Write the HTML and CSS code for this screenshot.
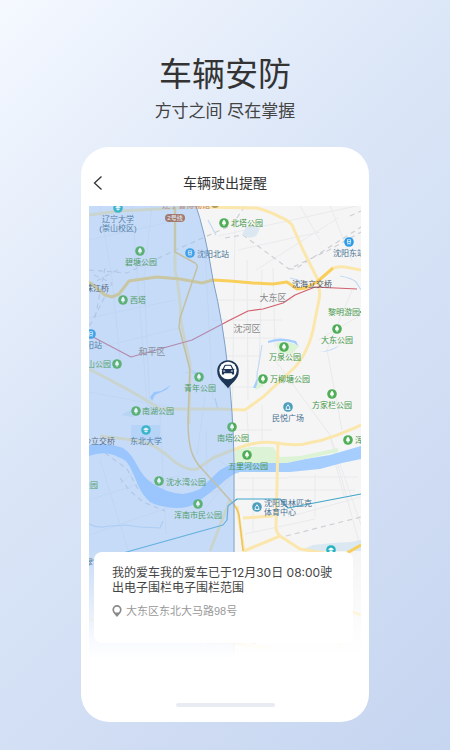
FILE: index.html
```html
<!DOCTYPE html>
<html lang="zh-CN">
<head>
<meta charset="utf-8">
<meta name="viewport" content="width=device-width, initial-scale=1">
<title>车辆安防</title>
<link rel="stylesheet" href="styles.css">
</head>
<body>
<header class="intro">
  <h1 class="intro-title">车辆安防</h1>
  <p class="intro-text">方寸之间 尽在掌握</p>
</header>
<main class="phone">
  <div class="nav">
    <button class="back" type="button" aria-label="返回">
      <svg width="10" height="16" viewBox="0 0 10 16"><path d="M8.500 1.500 1.500 8l7 6.500"/></svg>
    </button>
    <h2 class="nav-title">车辆驶出提醒</h2>
  </div>
  <section class="stage">
    <svg class="map" viewBox="89 206 272 454" role="img" aria-label="地图">
      <defs>
        <symbol id="park" viewBox="0 0 10 10"><circle cx="5" cy="5" r="4.800" fill="#4fae57"/><path d="M5 1.800C3.800 2.900 3.100 4.300 3.100 5.200c0 .9.700 1.400 1.500 1.400v1.500h.8V6.600c.8 0 1.500-.5 1.500-1.400C6.900 4.300 6.200 2.900 5 1.800z" fill="#fff"/></symbol>
        <symbol id="station" viewBox="0 0 10 10"><circle cx="5" cy="5" r="4.800" fill="#2a9be6"/><path d="M3.400 2.700h3.200v3.600H3.400zM3.400 4.500h3.200M3.700 7.800l.8-1.300M6.300 7.800l-.8-1.300" fill="none" stroke="#fff" stroke-width=".7"/></symbol>
        <symbol id="school" viewBox="0 0 10 10"><circle cx="5" cy="5" r="4.800" fill="#25b3bf"/><path d="M2 4.200 5 2.600l3 1.600-3 1.600zM3.400 5.400v1.300L5 7.600l1.600-.9V5.400L5 6.200z" fill="#fff"/></symbol>
        <symbol id="venue" viewBox="0 0 10 10"><circle cx="5" cy="5" r="4.800" fill="#4b9fbd"/><path d="M3.300 7V5.300L5 2.700l1.700 2.600V7M2.500 7.400h5" fill="none" stroke="#fff" stroke-width=".9"/></symbol>
        <linearGradient id="fade" x1="0" y1="550" x2="0" y2="659" gradientUnits="userSpaceOnUse"><stop offset="0" stop-color="#fff" stop-opacity="0"/><stop offset=".5" stop-color="#fff" stop-opacity=".5"/><stop offset=".8" stop-color="#fff" stop-opacity=".84"/><stop offset="1" stop-color="#fff"/></linearGradient>
      </defs>
      <path class="land" d="M89 206h272v454H89z"/>
      <g class="streets">
        <path d="M89 240 170 222M89 318 175 300M89 350l90-22M89 392l95 18M100 206l12 72 8 80M132 206l16 210M152 206l-8 72 6 130M205 250l8 150M235 230l-3 200M247 260l1 140M262 270l-3 95M273 268l2 80M218 300h75M212 320h70M222 338h60M225 356h35M224 387h35M247 412l2 35M262 405v38M230 430h42M205 395l-8 60M160 415l6 120"/>
        <path d="M218 236 361 205M238 250l82-18M256 270l82-52M300 206l20 34M330 206l22 55M318 340l43-25M275 360l55 75 31 90M342 430l-15-80 25-60M330 436l30 110M238 478h50M235 490h120M288 477h70M253 478v54M315 474v43M288 517l73-20M245 534l70-15M89 500l50-16 40-8M100 460l28 90M89 535l130-45M119 484l17-13M219 460l20 14M200 515l30-37M206 431l1 45M335 462l9 34"/>
      </g>
      <path class="rail" d="M89 270l38 3 53-25 52-23 13-19M94 275l18 8-23 44M105 268l-10 50M89 285l30-16M225 238l18-3 46 34 40-19 32-18M289 269h6l66-42M350 216l11-5M120 478l9 12 14 12 22 9M105 453l22 16 11 20M286 536l75-19"/>
      <path class="water" d="M89 445q18-3 34 3 8 5 14 17 6 12 15 18 14 10 31 11 9-1 17-5l20-19q12-7 20-8h47l43-7 31-9v13l-19 4-22 6-30 3h-50q-9 2-20 13l-17 13q-8 7-16 9-10 2-20 0-10-1-17-5-8-7-12-17-4-10-8-18-4-8-12-10-13-7-29-1z"/>
      <path class="water" d="M150 397l4-5 7-1 10-6-5 5-11 5-3 6zM189 373l5-2 6 3zM253 388l4-10 2 4-3 6zM268 341q12-5 28 0l3 6-5-4q-12-4-26 0zM319 352q11-1 21-7-8 7-21 7z"/>
      <path class="pond" d="M242 235l4-8 8-1 6 3-4 7-6 2zM121 415l9-5 10 4-8 3zM184 373l8-3 8 4-7-1zM303 549l10-4 20-2 18-1 10-2v11h-58z"/>
      <path class="stream" d="M89 524q10 5 20 2 9 0 16-1l15 2 20 1 3-7M258 385q-2-10 0-16l4-24M215 398q2 8 3 12M340 276q12 2 16 6l5 8M208 220l8 15M290 278q9 2 14 5"/>
      <path class="green" d="M235 450l15-3h23l7 10 20-1 38-8v4l-51 11h-52zM259 379l-4 11 9-4zM276 343q12-3 23 3l-7 8-13-1z"/>
      <path class="campus" d="M131 425h29v17h-29z"/>
      <path class="road" d="M89 215l31-4 77-4 60 1q14 4 23 9 8 3 12 8l11 25 14 28q4 11 2 22l-4 20q-3 18-8 28-6 14-15 22l-29 27-18 13-25-1h-60q-20-14-71-40"/>
      <path class="road" d="M175 208v62q5 20 6 52l9 42-1 60M100 436l33 4q17 3 24 8l10 7q8 8 13 10 10 6 17 4l16-11 17-7 17-6q15-4 30-2 20 4 36-1 17-3 48-17M278 442l-2 85q0 5 4 9l20 13 30 5M243 518l30-2M237 506l7 45 36-15M333 268q8-2 12-1l16 3M230 500l-20 51M89 619l30 10 60-1 50 15 40 5M285 635l20-25 30-5 26 10M335 632l8 18"/>
      <path class="highway" d="M89 282l16 13 7 2 7-3 10-13 28-4 23 2 22 4 11-3 17 1 23 2 20 1 14-2 10 7 9-1 11-6 16-14M347 553l14-8"/>
      <path class="ring" d="M175 207v45l20 11q3 2 2 5l-17 50-1 9 11 43-2 50q0 19 3 30 3 11 12 20l27 30q7 7 9 15l4 36"/>
      <path class="metro" d="M89 561l34-8 100-28 4-5 1-14 9-7h43l8 9 73-14"/>
      <path class="border" d="M93 337l38 20 36-10 25-7 38-20 18-9 15-2 20-6 12-8 20-8 42 2"/>
      <path class="fence" d="M85 200h109q12 34 19 80 10 42 15 90 5 40 6 90v205H85z"/>
      <g class="label">
        <g class="parks">
          <text x="247" y="226">北塔公园</text><text x="141" y="265">碧塘公园</text><text x="138" y="303">西塔</text><text x="99" y="367">山公园</text><text x="200" y="391">青年公园</text><text x="158" y="414">南湖公园</text><text x="285" y="360">万泉公园</text><text x="290" y="382">万柳塘公园</text><text x="337" y="343">大东公园</text><text x="344" y="315">黎明游园</text><text x="332" y="408">方家栏公园</text><text x="233" y="441">南塔公园</text><text x="248" y="469">五里河公园</text><text x="186" y="485">沈水湾公园</text><text x="198" y="518">浑南市民公园</text><text x="359" y="443">浑</text><text x="90" y="488">公园</text><circle cx="361" cy="312" r="1"/>
        </g>
        <g class="places">
          <text x="118" y="222">辽宁大学</text><text x="118" y="231">(崇山校区)</text><text x="213" y="257">沈阳北站</text><text x="349" y="256">沈阳东站</text><text x="94" y="348">阳站</text><text x="146" y="444">东北大学</text><text x="288" y="421">民悦广场</text><text x="288" y="506">沈阳奥林匹克</text><text x="280" y="515">体育中心</text>
        </g>
        <g class="bridges"><text x="312" y="287">沈海立交桥</text><text x="97" y="291">珠江桥</text><text x="99" y="444">沙立交桥</text><text x="89" y="565">翠</text></g>
        <g class="districts"><text x="273" y="301">大东区</text><text x="247" y="332">沈河区</text><text x="152" y="355">和平区</text></g>
        <g class="faint"><text x="145" y="642">白塔堡公园</text><text x="228" y="643">兴隆警务工作站</text><text x="186" y="208">辽宁省博物馆</text></g>
        <circle cx="215" cy="204" r="4" fill="#b39a5b"/>
        <rect x="165" y="214" width="20" height="8" rx="4" fill="#a8694c"/><text class="line-name" x="175" y="220">2号线</text>
      </g>
      <g>
        <use href="#park" x="219" y="218" width="10" height="10"/><use href="#park" x="135" y="246" width="10" height="10"/><use href="#park" x="118" y="295" width="10" height="10"/><use href="#park" x="112" y="359" width="10" height="10"/><use href="#park" x="194" y="372" width="10" height="10"/><use href="#park" x="131" y="406" width="10" height="10"/><use href="#park" x="279" y="342" width="10" height="10"/><use href="#park" x="258" y="374" width="10" height="10"/><use href="#park" x="332" y="324" width="10" height="10"/><use href="#park" x="327" y="389" width="10" height="10"/><use href="#park" x="227" y="422" width="10" height="10"/><use href="#park" x="242" y="450" width="10" height="10"/><use href="#park" x="154" y="476" width="10" height="10"/><use href="#park" x="193" y="499" width="10" height="10"/><use href="#park" x="343" y="435" width="10" height="10"/>
        <use href="#station" x="185" y="248" width="10" height="10"/><use href="#station" x="344" y="237" width="10" height="10"/><use href="#station" x="86" y="329" width="10" height="10"/>
        <use href="#school" x="113" y="203" width="10" height="10"/><use href="#school" x="141" y="425" width="10" height="10"/><use href="#school" x="326" y="545" width="10" height="10"/>
        <use href="#venue" x="283" y="402" width="10" height="10"/><use href="#venue" x="252" y="502" width="10" height="10"/>
      </g>
      <path class="fence-veil" d="M85 200h109q12 34 19 80 10 42 15 90 5 40 6 90v205H85z"/>
      <path fill="url(#fade)" d="M89 550h272v110H89z"/>
      <g class="car">
        <path d="M228 388.500c-2-4.500-10.800-8.500-10.800-17.500a10.800 10.800 0 0 1 21.600 0c0 9-8.800 13-10.800 17.500z" fill="#1d3557"/>
        <circle cx="228" cy="370.500" r="8.700" fill="#fff"/>
        <path d="M222.600 369l1.600-3.200q.4-1 1.400-1h4.800q1 0 1.400 1l1.600 3.200 1-.2v.8l-.6.4.3 1.200v3.400h-2.200v-1.300h-7.800v1.300h-2.200v-3.400l.3-1.200-.6-.4v-.8zM224 369.100h8l-1.200-2.800q-.2-.5-.8-.5h-4q-.6 0-.8.500zM223.200 370.400v1.200h2.200l-.6-1zM232.800 370.400v1.200h-2.200l.6-1z" fill="#1d3557" fill-rule="evenodd"/>
      </g>
    </svg>
    <article class="card">
      <p class="message">我的爱车我的爱车已于12月30日 08:00驶出电子围栏电子围栏范围</p>
      <p class="address">
        <svg width="10" height="12" viewBox="0 0 10 12" aria-hidden="true"><path fill-rule="evenodd" d="M5 0a4.600 4.600 0 0 0-4.600 4.700C.4 7.500 3 9.500 5 12c2-2.500 4.600-4.500 4.600-7.300A4.600 4.600 0 0 0 5 0zM5 1.800a2.900 2.900 0 1 1 0 5.800 2.900 2.900 0 0 1 0-5.800z" fill="#8a8a8a"/></svg>
        <span>大东区东北大马路98号</span>
      </p>
    </article>
  </section>
  <div class="home-bar"></div>
</main>
</body>
</html>
```

FILE: styles.css
```css
* { box-sizing: border-box; }
body {
  margin: 0;
  min-height: 100vh;
  padding: 53px 0 27px;
  background: linear-gradient(135deg, #f5f9ff 0%, #dbe6f7 38%, #c6d5f0 100%);
  color: #333;
  font-family: "Liberation Sans", "Noto Sans CJK SC", sans-serif;
}
h1, h2, p { margin: 0; font-weight: 400; }
.intro { text-align: center; }
.intro-title { font-size: 33px; line-height: 44px; }
.intro-text { margin-top: 3px; font-size: 17px; line-height: 24px; color: #444; }
.phone {
  width: 64%;
  margin: 23px auto 0;
  padding: 12px 8px;
  border-radius: 28px;
  background: #fff;
}
.nav {
  display: grid;
  grid-template-columns: 24px 1fr 24px;
  align-items: center;
  height: 47px;
}
.back { display: flex; padding: 0 4px; border: 0; background: none; }
.back path { fill: none; stroke: #333; stroke-width: 1.3; }
.nav-title { font-size: 14px; line-height: 20px; text-align: center; }
.stage { display: grid; }
.stage > * { grid-area: 1 / 1; }
.map { display: block; width: 100%; height: auto; }
.card {
  align-self: end;
  margin: 0 8px 17px 5px;
  padding: 13px 16px 24px 18px;
  border-radius: 8px;
  background: #fff;
}
.message { font-family: Inter, "Noto Sans CJK SC", sans-serif; font-size: 12px; line-height: 15px; color: #444; }
.address {
  display: flex;
  align-items: center;
  gap: 4px;
  margin-top: 8px;
  font-size: 11px;
  line-height: 16px;
  color: #999;
}
.home-bar { width: 99px; height: 4px; margin: 43px auto 3px; border-radius: 2px; background: #e8ecf2; }

.land { fill: #f5f5f5; }
.streets, .rail, .stream, .road, .highway, .ring, .metro, .border { fill: none; stroke-linejoin: round; }
.streets { stroke: #e9eaec; stroke-width: 1; }
.rail { stroke: #cfd0d6; stroke-width: 1.2; stroke-dasharray: 5 4; }
.water { fill: #a5ceff; }
.pond { fill: #dbe8f1; }
.stream { stroke: #c3daf3; stroke-width: 1.2; }
.green { fill: #dcf3d6; }
.campus { fill: #d8e8f5; }
.road { stroke: #fbe7ac; stroke-width: 3; }
.highway { stroke: #f9cf5b; stroke-width: 3; }
.ring { stroke: #edc35c; stroke-width: 1.5; }
.metro { stroke: #3fa6c9; stroke-width: 1.2; }
.border { stroke: #d25f6d; stroke-width: 1.2; }
.label { font-size: 8px; text-anchor: middle; }
.parks { fill: #3f9546; }
.places { fill: #456f92; }
.bridges { fill: #4b5563; }
.districts { font-size: 9px; fill: #888; }
.faint { fill: #b98282; }
.line-name { font-size: 6px; fill: #fff; }
.fence { fill: #8fbdfb; fill-opacity: .32; stroke: #7d9dc4; stroke-width: 1; }
.fence-veil { fill: #8fbdfb; fill-opacity: .2; }
```
